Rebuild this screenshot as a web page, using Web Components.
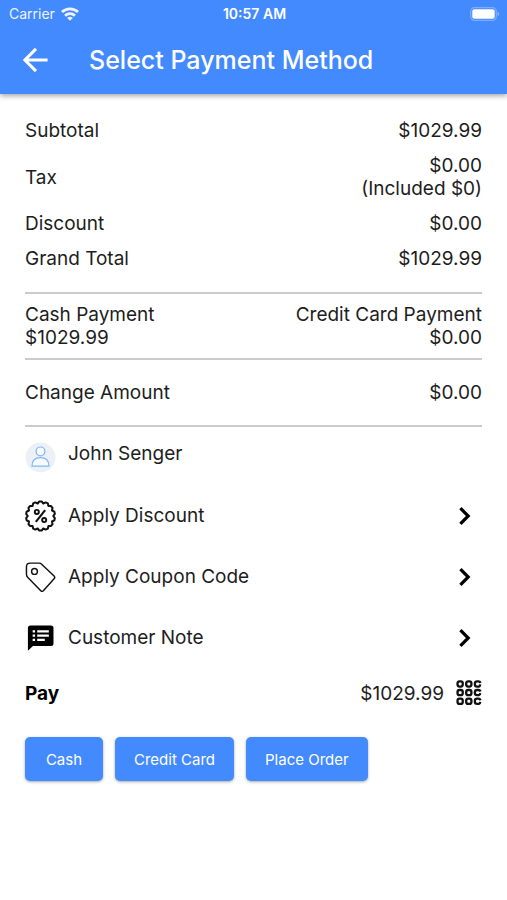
<!DOCTYPE html>
<html lang="en">
<head>
<meta charset="utf-8">
<meta name="viewport" content="width=device-width, initial-scale=1">
<title>Select Payment Method</title>
<style>
  body {
    margin: 0;
    background: #fff;
    color: #1d1d1d;
    font-family: Inter, "Liberation Sans", sans-serif;
    font-size: 19px;
    line-height: 23px;
    --primary: #448aff;
    --gutter: 25px;
    --rule: #cbcbcb;
  }
</style>
</head>
<body>
<payment-page></payment-page>

<script>
class StatusBar extends HTMLElement {
  constructor() {
    super();
    this.attachShadow({ mode: 'open' });
  }

  connectedCallback() {
    this.shadowRoot.innerHTML = `
      <style>
        :host {
          display: grid;
          grid-template-columns: 1fr auto 1fr;
          align-items: center;
          padding: 0 7px 0 9px;
          height: 27px;
          font-size: 14px;
          line-height: 20px;
          color: #fff;
        }
        .carrier {
          display: flex;
          align-items: center;
          gap: 6px;
          opacity: 0.9;
        }
        .time { font-weight: 600; }
        .battery { justify-self: end; }
        svg { display: block; }
      </style>
      <span class="carrier">
        <slot name="carrier"></slot>
        <svg width="18" height="14" viewBox="0 0 18 14" fill="none" stroke="#fff" stroke-width="2.8" aria-hidden="true">
          <path d="M1 5.1a11.4 11.4 0 0 1 16 0"/>
          <path d="M4.1 8.7a7 7 0 0 1 9.8 0"/>
          <path d="M9 13.8 6.2 11a4 4 0 0 1 5.6 0z" fill="#fff" stroke="none"/>
        </svg>
      </span>
      <span class="time"><slot name="time"></slot></span>
      <svg class="battery" width="30" height="14" viewBox="0 0 30 14" aria-hidden="true">
        <rect x="0.7" y="0.7" width="25.6" height="12.6" rx="3.8" fill="none" stroke="#fff" stroke-opacity="0.3" stroke-width="1.3"/>
        <rect x="2.3" y="2.3" width="22.4" height="9.4" rx="2" fill="#fff"/>
        <path d="M27.6 4.8c2 .8 2 3.6 0 4.4z" fill="#fff" fill-opacity="0.4"/>
      </svg>
    `;
  }
}

class AppHeader extends HTMLElement {
  constructor() {
    super();
    this.attachShadow({ mode: 'open' });
  }

  connectedCallback() {
    this.shadowRoot.innerHTML = `
      <style>
        :host {
          display: block;
          background: var(--primary);
          color: #fff;
          box-shadow: 0 2px 5px rgba(0, 0, 0, 0.35);
        }
        header {
          display: flex;
          align-items: center;
          gap: 40px;
          height: 65px;
          padding: 0 21px 2px;
        }
        button {
          padding: 0;
          border: 0;
          background: none;
          color: inherit;
          cursor: pointer;
        }
        svg { display: block; }
        h1 {
          margin: 0;
          font-size: 25px;
          line-height: 30px;
          font-weight: 500;
        }
      </style>
      <slot name="status"></slot>
      <header>
        <button type="button" aria-label="Back">
          <svg width="28" height="28" viewBox="0 0 28 28" fill="none" stroke="currentColor" stroke-width="3">
            <path d="M26.6 14H4.5M15 2.9 3.9 14 15 25.1"/>
          </svg>
        </button>
        <h1><slot></slot></h1>
      </header>
    `;
  }
}

class SummaryRow extends HTMLElement {
  constructor() {
    super();
    this.attachShadow({ mode: 'open' });
  }

  connectedCallback() {
    this.shadowRoot.innerHTML = `
      <style>
        :host {
          display: flex;
          justify-content: space-between;
          align-items: center;
        }
        .value { text-align: right; }
      </style>
      <span><slot name="label"></slot></span>
      <span class="value"><slot></slot></span>
    `;
  }
}

const icons = {
  // scalloped badge, outline is generated by badgePath()
  discount: () => `
    <path d="${badgePath(16, 16, 15, 13.2, 14)}" stroke-width="2.1" stroke-linejoin="round"/>
    <path d="M20.8 10 11.2 22" stroke-width="2.2"/>
    <circle cx="12.2" cy="11.8" r="2.1" stroke-width="2"/>
    <circle cx="19.8" cy="20.2" r="2.1" stroke-width="2"/>`,
  coupon: () => `
    <path d="M1.5 13.2V5.4Q1.5 1.7 5.2 1.7H14.4Q16 1.7 17.2 2.8L30 14.9Q31.4 16.4 30 17.9L19.2 30Q17.8 31.6 16.3 30.1L2.7 16.2Q1.5 15 1.5 13.2z" stroke-width="1.5" stroke-linejoin="round"/>
    <circle cx="9.8" cy="10.3" r="3" stroke-width="1.5"/>`,
  note: () => `
    <path d="M5.6 3H26.800Q29.400 3 29.400 5.600V21.600Q29.400 24.200 26.800 24.200H8.200L3 29.200V5.600Q3 3 5.600 3z" fill="#000" stroke="none"/>
    <path d="M7.900 9.200h2.500M7.900 13.600h2.500M7.900 18h2.500M12.600 9.200h12M12.600 13.600h12M12.600 18h7.800" stroke="#fff" stroke-width="2.400"/>`
};

function badgePath(cx, cy, outer, inner, teeth) {
  const points = [];
  const step = Math.PI / teeth;
  for (let i = 0; i < teeth * 2; i++) {
    const a = i * step - Math.PI / 2;
    const r = i % 2 ? inner : outer;
    const spread = i % 2 ? 0 : 0.08;
    [a - spread, a + spread].forEach((t) => {
      points.push(`${(cx + r * Math.cos(t)).toFixed(1)} ${(cy + r * Math.sin(t)).toFixed(1)}`);
    });
  }
  return `M${points.join('L')}z`;
}

class CustomerRow extends HTMLElement {
  constructor() {
    super();
    this.attachShadow({ mode: 'open' });
  }

  connectedCallback() {
    this.shadowRoot.innerHTML = `
      <style>
        :host {
          display: flex;
          gap: 12px;
          padding: 15px 0 12px;
        }
        svg { display: block; flex: none; }
      </style>
      <svg width="31" height="31" viewBox="0 0 31 31" aria-hidden="true">
        <circle cx="15.5" cy="15.5" r="15" fill="#edf0f4"/>
        <g fill="#f7faff" stroke="#7db8f7" stroke-width="1.2" stroke-linejoin="round">
          <circle cx="15.5" cy="9.4" r="4.4"/>
          <path d="M7 24.200C7 18.500 10 15.600 15.500 15.600S24 18.500 24 24.200z"/>
        </g>
      </svg>
      <slot></slot>
    `;
  }
}

class ActionRow extends HTMLElement {
  constructor() {
    super();
    this.attachShadow({ mode: 'open' });
  }

  connectedCallback() {
    const icon = icons[this.getAttribute('icon')];

    this.shadowRoot.innerHTML = `
      <style>
        :host { display: block; }
        button {
          display: flex;
          align-items: center;
          gap: 12px;
          width: 100%;
          height: 61px;
          padding: 0 11px 0 0;
          border: 0;
          background: none;
          color: inherit;
          font: inherit;
          text-align: left;
          cursor: pointer;
        }
        .label { flex: 1; }
        svg { display: block; flex: none; }
      </style>
      <button type="button">
        <svg width="31" height="32" viewBox="0 0 32 32" fill="none" stroke="#111" aria-hidden="true">${icon()}</svg>
        <span class="label"><slot></slot></span>
        <svg width="12" height="20" viewBox="0 0 12 20" fill="none" stroke="#000" stroke-width="3.2" aria-hidden="true">
          <path d="M1.400 2.200 9.200 10 1.400 17.800"/>
        </svg>
      </button>
    `;
  }
}

class PayRow extends HTMLElement {
  constructor() {
    super();
    this.attachShadow({ mode: 'open' });
  }

  connectedCallback() {
    // 3x3 keypad, the keys of the last column are open on the right
    let keys = '';
    for (let row = 0; row < 3; row++) {
      for (let col = 0; col < 3; col++) {
        const x = 1.6 + col * 9;
        const y = 1.4 + row * 9;
        keys += col < 2
          ? `<rect x="${x}" y="${y}" width="5.4" height="5.4" rx="2"/>`
          : `<path d="M${x + 6} ${y + 1.6}q-.8-1.600-2.400-1.600h-1.200q-2.400 0-2.400 2.400v.8q0 2.200 2.400 2.200h1.800q1.200-.2 1.400-2.200"/>`;
      }
    }

    this.shadowRoot.innerHTML = `
      <style>
        :host {
          display: flex;
          align-items: center;
          gap: 12px;
        }
        strong { flex: 1; font-weight: 700; color: #000; }
        button {
          padding: 0;
          border: 0;
          background: none;
          cursor: pointer;
        }
        svg { display: block; }
      </style>
      <strong><slot name="label"></slot></strong>
      <slot></slot>
      <button type="button" aria-label="Enter amount">
        <svg width="26" height="26" viewBox="0 0 27 27" fill="none" stroke="#111" stroke-width="2.4">${keys}</svg>
      </button>
    `;
  }
}

class PayButton extends HTMLElement {
  constructor() {
    super();
    this.attachShadow({ mode: 'open' });
  }

  connectedCallback() {
    this.shadowRoot.innerHTML = `
      <style>
        :host { display: block; }
        button {
          display: block;
          min-width: 78px;
          height: 44px;
          padding: 0 19px;
          border: 0;
          border-radius: 5px;
          background: var(--primary);
          box-shadow: 0 1px 3px rgba(0, 0, 0, 0.35);
          color: #fff;
          font: inherit;
          font-size: 15px;
          cursor: pointer;
        }
      </style>
      <button type="button"><slot></slot></button>
    `;
  }
}

class PaymentPage extends HTMLElement {
  constructor() {
    super();
    this.attachShadow({ mode: 'open' });
  }

  connectedCallback() {
    this.shadowRoot.innerHTML = `
      <style>
        :host { display: block; }
        main { padding: 25px var(--gutter); }
        section { border-bottom: 2px solid var(--rule); }
        .totals {
          display: grid;
          gap: 12px;
          padding-bottom: 22px;
        }
        .split { padding: 9px 0; }
        .change { padding: 21px 0; }
        .pay { padding: 12px 0 31px; }
        .buttons {
          display: flex;
          flex-wrap: wrap;
          gap: 12px;
        }
      </style>
      <app-header>
        <status-bar slot="status">
          <span slot="carrier">Carrier</span>
          <span slot="time">10:57 AM</span>
        </status-bar>
        Select Payment Method
      </app-header>
      <main>
        <section class="totals">
          <summary-row><span slot="label">Subtotal</span>$1029.99</summary-row>
          <summary-row><span slot="label">Tax</span>$0.00<br>(Included $0)</summary-row>
          <summary-row><span slot="label">Discount</span>$0.00</summary-row>
          <summary-row><span slot="label">Grand Total</span>$1029.99</summary-row>
        </section>
        <section class="split">
          <summary-row><span slot="label">Cash Payment<br>$1029.99</span>Credit Card Payment<br>$0.00</summary-row>
        </section>
        <section class="change">
          <summary-row><span slot="label">Change Amount</span>$0.00</summary-row>
        </section>
        <customer-row>John Senger</customer-row>
        <div class="actions">
          <action-row icon="discount">Apply Discount</action-row>
          <action-row icon="coupon">Apply Coupon Code</action-row>
          <action-row icon="note">Customer Note</action-row>
        </div>
        <pay-row class="pay"><span slot="label">Pay</span>$1029.99</pay-row>
        <div class="buttons">
          <pay-button>Cash</pay-button>
          <pay-button>Credit Card</pay-button>
          <pay-button>Place Order</pay-button>
        </div>
      </main>
    `;
  }
}

customElements.define('status-bar', StatusBar);
customElements.define('app-header', AppHeader);
customElements.define('summary-row', SummaryRow);
customElements.define('customer-row', CustomerRow);
customElements.define('action-row', ActionRow);
customElements.define('pay-row', PayRow);
customElements.define('pay-button', PayButton);
customElements.define('payment-page', PaymentPage);
</script>
</body>
</html>
